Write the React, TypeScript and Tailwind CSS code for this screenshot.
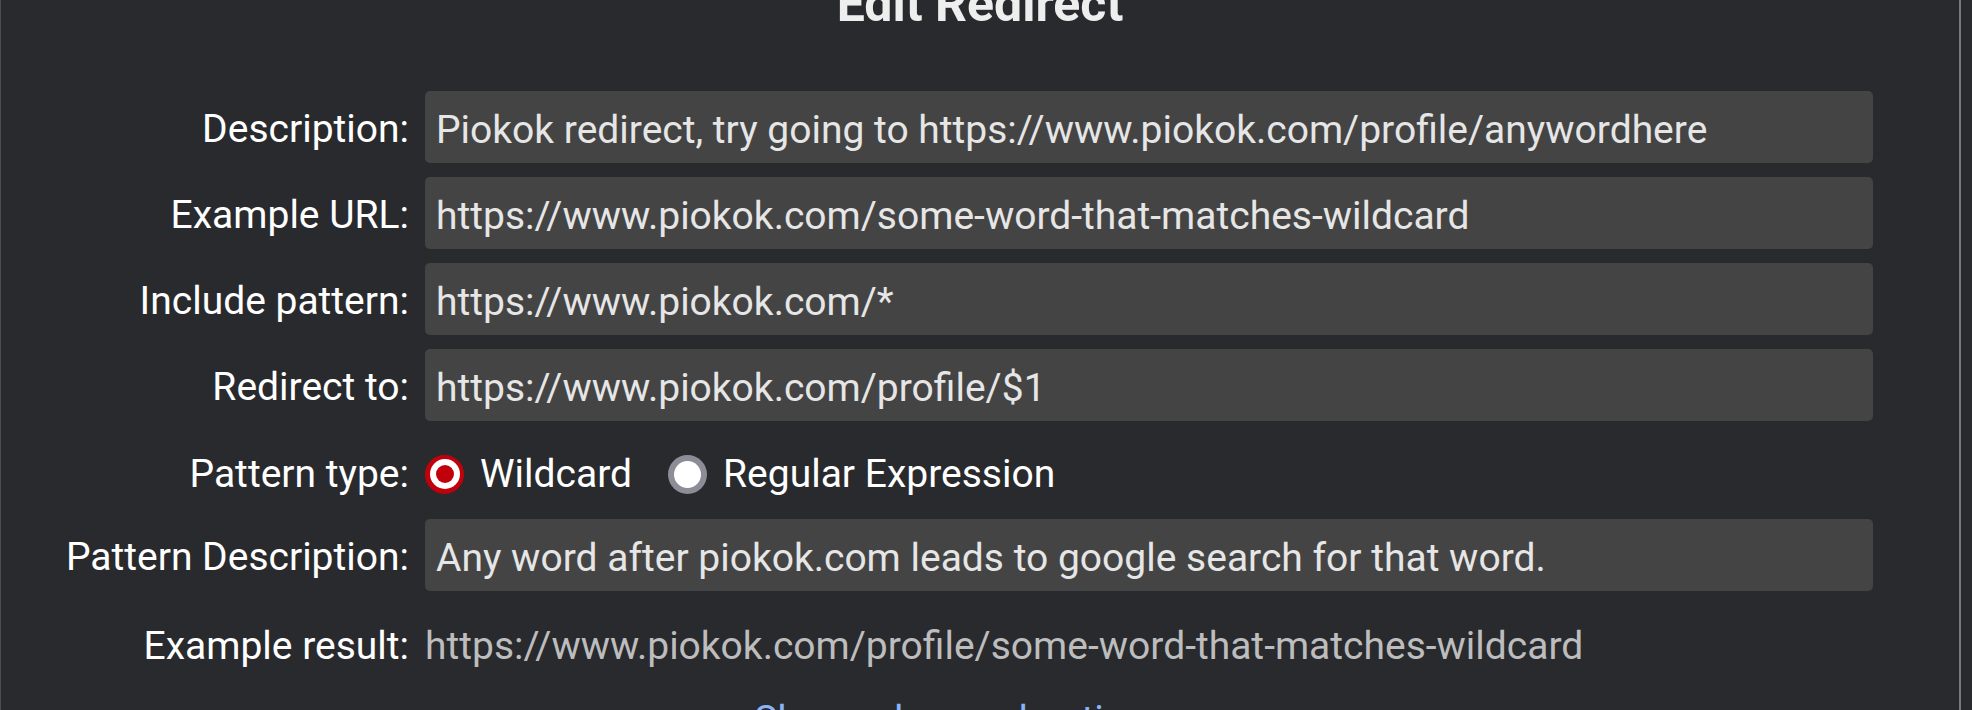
import React from 'react'

const fields = [
  { label: 'Description:', value: 'Piokok redirect, try going to https://www.piokok.com/profile/anywordhere' },
  { label: 'Example URL:', value: 'https://www.piokok.com/some-word-that-matches-wildcard' },
  { label: 'Include pattern:', value: 'https://www.piokok.com/*' },
  { label: 'Redirect to:', value: 'https://www.piokok.com/profile/$1' },
]

function Field({ label, value }: { label: string; value: string }) {
  return (
    <div className="grid grid-cols-[408px_1fr] gap-x-4 items-center h-[72px]">
      <label className="pt-[5px] text-right text-white">{label}</label>
      <input
        readOnly
        defaultValue={value}
        className="h-[72px] w-full rounded-[5px] bg-[#444444] pl-[11px] pt-[5px] text-[#e6e6e6] outline-none"
      />
    </div>
  )
}

function Radio({ checked, label }: { checked?: boolean; label: string }) {
  return (
    <span className="inline-flex items-center gap-4">
      {checked ? (
        <span className="flex h-[39px] w-[39px] items-center justify-center rounded-full bg-[#c1000b]">
          <span className="flex h-[30px] w-[30px] items-center justify-center rounded-full bg-white">
            <span className="h-[18px] w-[18px] rounded-full bg-[#c1000b]" />
          </span>
        </span>
      ) : (
        <span className="flex h-[39px] w-[39px] items-center justify-center rounded-full bg-[#8d8d97]">
          <span className="h-[27px] w-[27px] rounded-full bg-white" />
        </span>
      )}
      <span className="text-white">{label}</span>
    </span>
  )
}

export default function App() {
  return (
    <div
      className="flex h-[710px] w-full overflow-hidden bg-[#292a2e] text-[39px]"
      style={{ fontFamily: 'Roboto, "Noto Sans", sans-serif' }}
    >
      <div className="w-[1961px] shrink-0 border-l border-l-[#4b4c50] border-r-2 border-r-[#78797d] pr-[86px]">
        <h1 className="-mt-[21px] h-[50px] pl-[86px] text-center text-[50px] font-bold leading-none text-[#eeeeee]">
          Edit Redirect
        </h1>

        <div className="mt-[62px] flex flex-col gap-[14px]">
          {fields.map((f) => (
            <Field key={f.label} label={f.label} value={f.value} />
          ))}

          <div className="grid h-[70px] grid-cols-[408px_1fr] items-center gap-x-4 pt-[8px]">
            <span className="text-right text-white">Pattern type:</span>
            <div className="flex items-center gap-[36px]">
              <Radio checked label="Wildcard" />
              <Radio label="Regular Expression" />
            </div>
          </div>

          <Field
            label="Pattern Description:"
            value="Any word after piokok.com leads to google search for that word."
          />
        </div>

        <div className="mt-[26px] grid grid-cols-[408px_1fr] items-center gap-x-4">
          <span className="text-right text-white">Example result:</span>
          <span className="text-[#bdbdbd]">https://www.piokok.com/profile/some-word-that-matches-wildcard</span>
        </div>

        <div className="mt-[15px] pl-[48px] text-center">
          <a className="text-[#8ab4f8]">Show advanced options</a>
        </div>
      </div>
    </div>
  )
}
